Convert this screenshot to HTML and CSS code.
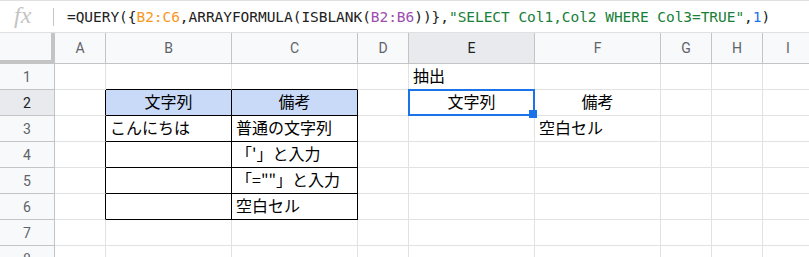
FILE: index.html
```html
<!DOCTYPE html>
<html>
<head>
  <meta charset="UTF-8">
  <title>QUERY ISBLANK</title>
  <link rel="stylesheet" href="styles.css">
</head>
<body>
  <!-- 数式バー -->
  <div class="formula-bar">
    <span class="fx">fx</span>
    <span class="fx-sep"></span>
    <span class="formula">=QUERY({<span class="ref-a">B2:C6</span>,ARRAYFORMULA(ISBLANK(<span class="ref-b">B2:B6</span>))},<span class="str">"SELECT Col1,Col2 WHERE Col3=TRUE"</span>,<span class="num">1</span>)</span>
  </div>

  <!-- シート -->
  <div class="sheet">
    <div class="corner"></div>
    <div class="col-head">A</div>
    <div class="col-head">B</div>
    <div class="col-head">C</div>
    <div class="col-head">D</div>
    <div class="col-head active">E</div>
    <div class="col-head">F</div>
    <div class="col-head">G</div>
    <div class="col-head">H</div>
    <div class="col-head">I</div>

    <div class="row-head">1</div>
    <div class="cell"></div>
    <div class="cell tb"></div>
    <div class="cell tb"></div>
    <div class="cell"></div>
    <div class="cell">抽出</div>
    <div class="cell"></div>
    <div class="cell"></div>
    <div class="cell"></div>
    <div class="cell"></div>

    <div class="row-head active">2</div>
    <div class="cell tr"></div>
    <div class="cell tb tr head center">文字列</div>
    <div class="cell tb tr head center">備考</div>
    <div class="cell"></div>
    <div class="cell center selected">文字列<span class="sel-box"><span class="handle"></span></span></div>
    <div class="cell center">備考</div>
    <div class="cell"></div>
    <div class="cell"></div>
    <div class="cell"></div>

    <div class="row-head">3</div>
    <div class="cell tr"></div>
    <div class="cell tb tr">こんにちは</div>
    <div class="cell tb tr">普通の文字列</div>
    <div class="cell"></div>
    <div class="cell"></div>
    <div class="cell">空白セル</div>
    <div class="cell"></div>
    <div class="cell"></div>
    <div class="cell"></div>

    <div class="row-head">4</div>
    <div class="cell tr"></div>
    <div class="cell tb tr"></div>
    <div class="cell tb tr">「'」と入力</div>
    <div class="cell"></div>
    <div class="cell"></div>
    <div class="cell"></div>
    <div class="cell"></div>
    <div class="cell"></div>
    <div class="cell"></div>

    <div class="row-head">5</div>
    <div class="cell tr"></div>
    <div class="cell tb tr"></div>
    <div class="cell tb tr">「=""」と入力</div>
    <div class="cell"></div>
    <div class="cell"></div>
    <div class="cell"></div>
    <div class="cell"></div>
    <div class="cell"></div>
    <div class="cell"></div>

    <div class="row-head">6</div>
    <div class="cell tr"></div>
    <div class="cell tb tr"></div>
    <div class="cell tb tr">空白セル</div>
    <div class="cell"></div>
    <div class="cell"></div>
    <div class="cell"></div>
    <div class="cell"></div>
    <div class="cell"></div>
    <div class="cell"></div>

    <div class="row-head">7</div>
    <div class="cell"></div>
    <div class="cell"></div>
    <div class="cell"></div>
    <div class="cell"></div>
    <div class="cell"></div>
    <div class="cell"></div>
    <div class="cell"></div>
    <div class="cell"></div>
    <div class="cell"></div>

    <div class="row-head">8</div>
    <div class="cell"></div>
    <div class="cell"></div>
    <div class="cell"></div>
    <div class="cell"></div>
    <div class="cell"></div>
    <div class="cell"></div>
    <div class="cell"></div>
    <div class="cell"></div>
    <div class="cell"></div>
  </div>
</body>
</html>
```

FILE: styles.css
```css
* {
  box-sizing: border-box;
}

body {
  margin: 0;
  width: 809px;
  height: 257px;
  overflow: hidden;
  background: #fff;
  font-family: "Noto Sans CJK JP", "Noto Sans", sans-serif;
  color: #000;
}

/* 数式バー */
.formula-bar {
  height: 33px;
  display: flex;
  align-items: center;
  border-top: 1px solid #e0e0e0;
  border-bottom: 1px solid #e0e0e0;
  white-space: nowrap;
}

.fx {
  width: 53px;
  padding-left: 14px;
  font-family: "Liberation Serif", serif;
  font-style: italic;
  font-size: 24px;
  color: #c4c4c4;
  line-height: 1;
  margin-top: -4px;
}

.fx-sep {
  width: 1px;
  height: 18px;
  background: #c4c4c4;
}

.formula {
  margin-left: 13px;
  font-family: "DejaVu Sans Mono", monospace;
  font-size: 14.5px;
  letter-spacing: -0.05px;
  color: #222;
}

.ref-a { color: #f7981d; }
.ref-b { color: #9c4fb0; }
.str { color: #188038; }
.num { color: #1a73e8; }

/* シート */
.sheet {
  display: grid;
  grid-template-columns: 55px 51px 126px 126px 51px 126px 126px 51px 51px 51px;
  grid-template-rows: 31px repeat(8, 26px);
  width: 814px;
}

.corner {
  background: #f8f9fa;
  border-right: 4px solid #c4c4c4;
  border-bottom: 4px solid #c4c4c4;
}

.col-head, .row-head {
  background: #f8f9fa;
  color: #5f6368;
  font-family: Roboto, "Liberation Sans", sans-serif;
  font-size: 14px;
  display: flex;
  align-items: center;
  justify-content: center;
  border-right: 1px solid #c4c4c4;
  border-bottom: 1px solid #c4c4c4;
}

.col-head.active, .row-head.active {
  background: #e8eaed;
  color: #202124;
}

.cell {
  position: relative;
  border-right: 1px solid #e2e2e2;
  border-bottom: 1px solid #e2e2e2;
  padding: 0 4px 2px;
  font-size: 16px;
  line-height: 23px;
  white-space: nowrap;
  display: flex;
  align-items: flex-end;
}

.cell.center {
  justify-content: center;
}

/* 表の罫線 */
.cell.tb { border-bottom-color: #000; }
.cell.tr { border-right-color: #000; }

.cell.head {
  background: #c9daf8;
}

/* 選択セル */
.cell.selected {
  z-index: 2;
}

.sel-box {
  position: absolute;
  top: -1px;
  left: -1px;
  right: -1px;
  bottom: -1px;
  border: 2px solid #1a73e8;
}

.handle {
  position: absolute;
  right: -4px;
  bottom: -4px;
  width: 8px;
  height: 8px;
  background: #1a73e8;
}
```
